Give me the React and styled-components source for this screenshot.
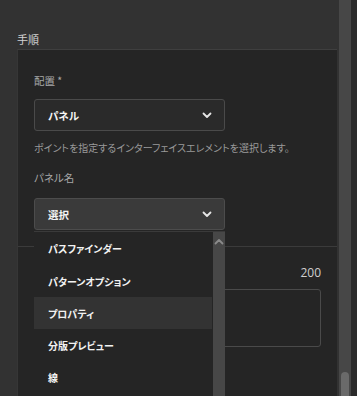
import React from "react";
import styled, { createGlobalStyle } from "styled-components";

const GlobalStyle = createGlobalStyle`
  html, body {
    margin: 0;
    padding: 0;
    background: #323232;
    overflow: hidden;
  }
  body {
    font-family: "Noto Sans CJK JP", "Noto Sans", sans-serif;
    font-feature-settings: "palt";
  }
`;

const items = ["パスファインダー", "パターンオプション", "プロパティ", "分版プレビュー", "線"];

const Page = styled.div`
  display: flex;
  width: 357px;
  height: 396px;
  overflow: hidden;
  background: #323232;
`;

const Main = styled.div`
  width: 337px;
  padding-top: 32px;
  display: flex;
  flex-direction: column;
`;

const SectionTitle = styled.div`
  margin-left: 17px;
  height: 17px;
  font-size: 11px;
  line-height: 14px;
  color: #d2d2d2;
`;

const Panel = styled.div`
  margin-left: 17px;
  flex: 1;
  background: #252525;
  border-top: 1px solid #3f3f3f;
  border-left: 1px solid #363636;
  display: flex;
  flex-direction: column;
`;

const Group = styled.div`
  display: flex;
  flex-direction: column;
  padding: ${(p) => p.$top}px 16px 16px 16px;
  border-bottom: 1px solid ${(p) => (p.$divider ? "#3b3b3b" : "transparent")};
`;

const Label = styled.div`
  font-size: 10.5px;
  line-height: 14px;
  color: #a8a8a8;
  margin-top: ${(p) => p.$top || 0}px;
`;

const SelectWrap = styled.div`
  position: relative;
  margin-top: ${(p) => p.$top || 0}px;
`;

const Select = styled.div`
  width: 191px;
  height: 32px;
  box-sizing: border-box;
  display: flex;
  align-items: center;
  justify-content: space-between;
  padding: 0 12px 0 13px;
  border: 1px solid ${(p) => (p.$open ? "#4c4c4c" : "#4a4a4a")};
  border-radius: 3px;
  background: ${(p) => (p.$open ? "#3a3a3a" : "#2a2a2a")};
  color: #f4f4f4;
  font-size: 10.5px;
  font-weight: 700;
`;

const Help = styled.div`
  margin-top: 10px;
  font-size: 10px;
  line-height: 14px;
  color: #9a9a9a;
  white-space: nowrap;
`;

const Menu = styled.div`
  position: absolute;
  left: 0;
  top: calc(100% + 1px);
  width: 191px;
  height: 170px;
  display: flex;
  background: #252525;
  border-top: 1px solid #3a3a3a;
  z-index: 2;
`;

const List = styled.div`
  flex: 1;
  display: flex;
  flex-direction: column;
`;

const Item = styled.div`
  height: ${(p) => (p.$first ? 33 : 32)}px;
  flex-shrink: 0;
  display: flex;
  align-items: center;
  padding-left: 14px;
  font-size: 10px;
  font-weight: 700;
  color: #f2f2f2;
  background: ${(p) => (p.$active ? "#333333" : "transparent")};
`;

const MenuScroll = styled.div`
  width: 12px;
  margin-left: 1px;
  background: #474747;
  display: flex;
  justify-content: center;
  align-items: flex-start;
  padding-top: 6px;
`;

const CountRow = styled.div`
  display: flex;
  justify-content: flex-end;
  font-size: 12px;
  line-height: 14px;
  color: #cfcfcf;
  font-family: "Open Sans", "Noto Sans", sans-serif;
`;

const TextBox = styled.div`
  margin-top: 9px;
  height: 56px;
  border: 1px solid #4a4a4a;
  border-radius: 3px;
  background: #252525;
`;

const Gap = styled.div`
  width: 2px;
  background: #323232;
`;

const Track = styled.div`
  width: 12px;
  background: #474747;
  display: flex;
  flex-direction: column;
  justify-content: flex-end;
`;

const Thumb = styled.div`
  height: 24px;
  margin: 0 2px;
  border-radius: 4px 4px 0 0;
  background: #6a6a6a;
`;

const Edge = styled.div`
  flex: 1;
  background: #2b2b2b;
`;

const Chevron = ({ up, color = "#e6e6e6" }) => (
  <svg width="10" height="7" viewBox="0 0 10 7">
    <path
      d={up ? "M1.5 5.5 L5 2 L8.5 5.5" : "M1.5 1.5 L5 5 L8.5 1.5"}
      fill="none"
      stroke={color}
      strokeWidth="1.8"
      strokeLinecap="round"
      strokeLinejoin="round"
    />
  </svg>
);

export default function App() {
  return (
    <Page>
      <GlobalStyle />
      <Main>
        <SectionTitle>手順</SectionTitle>
        <Panel>
          <Group $top={24} $divider>
            <Label>配置 *</Label>
            <SelectWrap $top={11}>
              <Select>
                <span>パネル</span>
                <Chevron />
              </Select>
            </SelectWrap>
            <Help>ポイントを指定するインターフェイスエレメントを選択します。</Help>
            <Label $top={16}>パネル名</Label>
            <SelectWrap $top={13}>
              <Select $open>
                <span>選択</span>
                <Chevron />
              </Select>
              <Menu>
                <List>
                  {items.map((it, i) => (
                    <Item key={it} $first={i === 0} $active={i === 2}>
                      {it}
                    </Item>
                  ))}
                </List>
                <MenuScroll>
                  <Chevron up color="#8a8a8a" />
                </MenuScroll>
              </Menu>
            </SelectWrap>
          </Group>
          <Group $top={19}>
            <CountRow>200</CountRow>
            <TextBox />
          </Group>
        </Panel>
      </Main>
      <Gap />
      <Track>
        <Thumb />
      </Track>
      <Edge />
    </Page>
  );
}
